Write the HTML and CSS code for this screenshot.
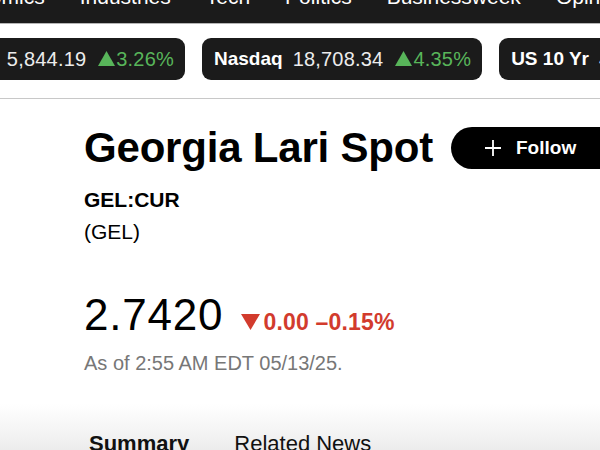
FILE: index.html
```html
<!DOCTYPE html>
<html lang="en">
<head>
<meta charset="utf-8">
<title>Georgia Lari Spot</title>
<link rel="stylesheet" href="styles.css">
</head>
<body>
<nav class="topnav">
  <div class="topnav-items">
    <a class="topnav-item">Economics</a>
    <a class="topnav-item">Industries</a>
    <a class="topnav-item">Tech</a>
    <a class="topnav-item">Politics</a>
    <a class="topnav-item">Businessweek</a>
    <a class="topnav-item">Opinion</a>
  </div>
</nav>

<section class="ticker">
  <div class="ticker-first">
    <div class="pill">
      <span class="pill-name">S&amp;P 500</span>
      <span class="pill-value">5,844.19</span>
      <span class="pill-change up"><svg class="tri" viewBox="0 0 16 14"><path d="M8 0 L16 14 L0 14 Z"/></svg>3.26%</span>
    </div>
  </div>
  <div class="pill">
    <span class="pill-name">Nasdaq</span>
    <span class="pill-value">18,708.34</span>
    <span class="pill-change up"><svg class="tri" viewBox="0 0 16 14"><path d="M8 0 L16 14 L0 14 Z"/></svg>4.35%</span>
  </div>
  <div class="pill">
    <span class="pill-name">US 10 Yr</span>
    <span class="pill-value">4.47</span>
    <span class="pill-change up"><svg class="tri" viewBox="0 0 16 14"><path d="M8 0 L16 14 L0 14 Z"/></svg>0.02%</span>
  </div>
</section>

<main class="quote">
  <div class="title-row">
    <h1 class="title">Georgia Lari Spot</h1>
    <button class="follow-btn"><svg class="plus" viewBox="0 0 16 16"><path d="M8 0 V16 M0 8 H16"/></svg><span>Follow</span></button>
  </div>
  <div class="ticker-id">
    <div class="symbol">GEL:CUR</div>
    <div class="currency">(GEL)</div>
  </div>
  <div class="price-row">
    <span class="price">2.7420</span>
    <span class="change down"><svg class="tri-down" viewBox="0 0 18 15"><path d="M0 0 H18 L9 15 Z"/></svg>0.00 &ndash;0.15%</span>
  </div>
  <div class="asof">As of 2:55 AM EDT 05/13/25.</div>
</main>

<section class="tabs">
  <span class="tab active">Summary</span>
  <span class="tab">Related News</span>
</section>
</body>
</html>
```

FILE: styles.css
```css
* { box-sizing: border-box; }

html, body {
  margin: 0;
  padding: 0;
  background: #fff;
  overflow: hidden;
}

body {
  font-family: "Liberation Sans", Arial, Helvetica, sans-serif;
  color: #000;
  width: 600px;
  height: 450px;
}

.topnav {
  background: #1b1b1b;
  height: 24px;
  border-bottom: 1px solid #b5b5b5;
  overflow: hidden;
}

.topnav-items {
  display: flex;
  gap: 35px;
  margin-left: -58px;
  margin-top: -15px;
  white-space: nowrap;
}

.topnav-item {
  color: #fff;
  font-size: 21px;
  line-height: 24px;
}

.ticker {
  display: flex;
  gap: 17px;
  padding: 14px 0 18px;
  border-bottom: 1px solid #c8c8c8;
  white-space: nowrap;
}

.ticker-first {
  width: 185px;
  flex-shrink: 0;
  display: flex;
  justify-content: flex-end;
}

.pill {
  flex-shrink: 0;
  height: 42px;
  background: #1b1b1b;
  border-radius: 9px;
  display: flex;
  align-items: center;
  padding: 0 11px 0 12px;
  color: #fff;
  font-size: 20px;
}

.pill-name {
  font-weight: 700;
  font-size: 19px;
  margin-right: 10px;
}

.pill-value {
  color: #ececec;
  margin-right: 12px;
  letter-spacing: 0.2px;
}

.pill-change {
  display: flex;
  align-items: center;
  letter-spacing: 0.2px;
}

.up { color: #58b55a; }

.tri {
  width: 17px;
  height: 15px;
  fill: #58b55a;
  margin-right: 1px;
  margin-top: -1px;
}

.quote {
  padding-left: 84px;
}

.title-row {
  display: flex;
  align-items: center;
  gap: 18px;
  margin-top: 24px;
}

.title {
  margin: 0;
  font-size: 42px;
  line-height: 50px;
  font-weight: 700;
  letter-spacing: -0.2px;
  white-space: nowrap;
}

.follow-btn {
  flex-shrink: 0;
  height: 42px;
  width: 170px;
  border: 0;
  border-radius: 21px;
  background: #000;
  color: #fff;
  display: flex;
  align-items: center;
  padding: 0 0 0 34px;
  font-family: inherit;
  font-size: 19px;
  font-weight: 700;
}

.plus {
  width: 16px;
  height: 16px;
  stroke: #fff;
  stroke-width: 1.8;
  fill: none;
  margin-right: 15px;
}

.ticker-id {
  margin-top: 11px;
  font-size: 21px;
  line-height: 32px;
}

.symbol { font-weight: 700; }

.price-row {
  margin-top: 42px;
  display: flex;
  align-items: baseline;
  line-height: 50px;
}

.price {
  font-size: 44px;
  letter-spacing: 0.8px;
}

.change {
  margin-left: 18px;
  font-size: 23px;
  font-weight: 700;
  letter-spacing: 0.2px;
  display: flex;
  align-items: baseline;
}

.down { color: #d23b2d; }

.tri-down {
  width: 19px;
  height: 16px;
  fill: #d23b2d;
  margin-right: 3px;
  align-self: center;
}

.asof {
  margin-top: 4px;
  font-size: 20px;
  line-height: 24px;
  color: #777;
}

.tabs {
  margin-top: 29px;
  height: 80px;
  padding: 27px 0 0 89px;
  background: linear-gradient(#fff 0, #f3f3f3 30px, #e6e6e6 60px);
  display: flex;
  gap: 45px;
  font-size: 22px;
  line-height: 26px;
}

.tab { color: #111; }

.tab.active { font-weight: 700; }
```
